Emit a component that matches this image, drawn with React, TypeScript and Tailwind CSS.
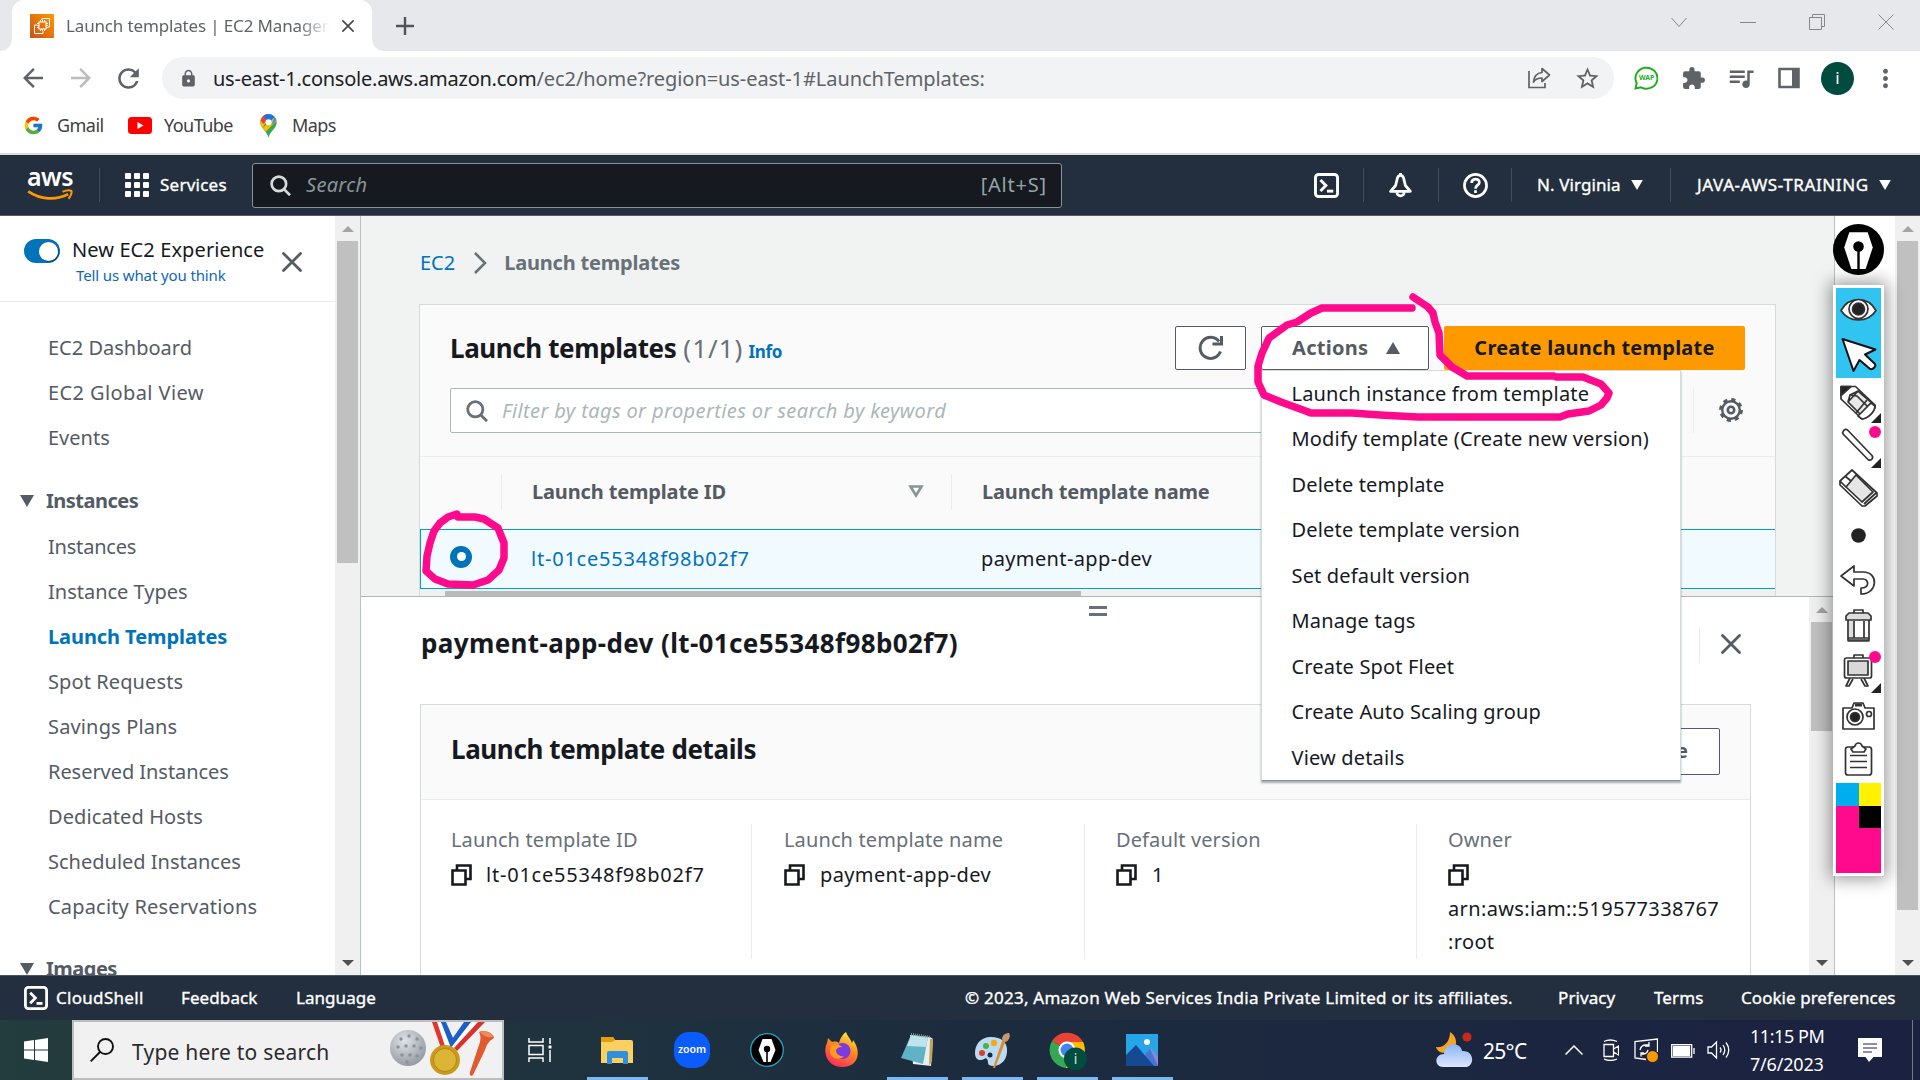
import React from "react";
import {
  MdArrowBack,
  MdArrowForward,
  MdExtension,
  MdLock,
  MdMoreVert,
  MdQueueMusic,
  MdRefresh,
  MdStarBorder,
} from "react-icons/md";
import { FcGoogle } from "react-icons/fc";

const medium = "[-webkit-text-stroke:0.35px_currentColor]";

/* ---------- shared pieces ---------- */

function CloseIcon({ className }: { className: string }) {
  return (
    <svg viewBox="0 0 20 20" className={className} fill="none" stroke="currentColor">
      <path d="M1.5 1.5l17 17M18.5 1.5l-17 17" strokeWidth="2.8" strokeLinecap="round" />
    </svg>
  );
}

function SearchIcon({ className }: { className: string }) {
  return (
    <svg viewBox="0 0 22 22" className={className} fill="none" stroke="currentColor" strokeWidth="2.8">
      <circle cx="9.3" cy="9.3" r="7.6" />
      <path d="M14.6 14.8L21 21.2" />
    </svg>
  );
}

function TerminalIcon({ className }: { className: string }) {
  return (
    <svg viewBox="0 0 24 24" className={className} fill="none" stroke="currentColor" strokeWidth="2.8">
      <rect x="1.4" y="1.4" width="21.2" height="21.2" rx="3" />
      <path d="M6.2 6.8l5.2 5.2-5.2 5.2" />
      <path d="M12.5 17.4h6" />
    </svg>
  );
}

function Triangle({ up, className }: { up?: boolean; className: string }) {
  return (
    <svg viewBox="0 0 14 12" className={className} fill="currentColor">
      {up ? <path d="M7 0l7 12H0z" /> : <path d="M0 0h14L7 12z" />}
    </svg>
  );
}

function ScrollArrow({ up }: { up?: boolean }) {
  return (
    <div className="flex h-[25px] w-full items-center justify-center">
      <svg viewBox="0 0 12 6" className={up ? "h-[6px] w-[12px] text-[#a3a3a3]" : "h-[6px] w-[12px] text-[#505050]"} fill="currentColor">
        {up ? <path d="M6 0l6 6H0z" /> : <path d="M0 0h12L6 6z" />}
      </svg>
    </div>
  );
}

function Scrollbar({ thumb }: { thumb: string }) {
  return (
    <div className="flex h-full w-[25px] shrink-0 flex-col items-center bg-[#f0f0f0]">
      <ScrollArrow up />
      <div className={`w-[21px] bg-[#c0c0c0] ${thumb}`} />
      <div className="flex-1" />
      <ScrollArrow />
    </div>
  );
}

function PenNib({ className }: { className: string }) {
  return (
    <svg viewBox="0 0 50 50" className={className}>
      <circle cx="25" cy="25" r="25" fill="#000" />
      <path d="M16 8h18l5 15-7 21H18l-7-21z" fill="#fff" />
      <circle cx="25" cy="22" r="5.2" fill="#000" />
      <path d="M25 22v23" stroke="#000" strokeWidth="2.4" />
    </svg>
  );
}

/* ---------- browser chrome ---------- */

function Ec2Favicon() {
  return (
    <svg viewBox="0 0 24 24" className="size-6 shrink-0">
      <defs>
        <linearGradient id="ec2" x1="0" y1="1" x2="1" y2="0">
          <stop offset="0" stopColor="#c8511b" />
          <stop offset="1" stopColor="#f90" />
        </linearGradient>
      </defs>
      <rect width="24" height="24" fill="url(#ec2)" />
      <g fill="none" stroke="#fff" strokeWidth="1">
        <rect x="9" y="8" width="7" height="7" />
        <path d="M10.500 6v2M12.500 6v2M14.500 6v2M10.500 15v2M12.500 15v2M14.500 15v2M7 9.500h2M7 11.500h2M7 13.500h2M16 9.500h2M16 11.500h2M16 13.500h2" />
        <path d="M12 6V4.500h7.500V13H18M7 11H4.500v8.500h8.500V17" />
      </g>
    </svg>
  );
}

function TabStrip() {
  return (
    <div className="flex h-[51px] bg-[#e7e8ec]">
      <div className="flex w-3 items-end bg-white">
        <div className="h-full w-full rounded-br-[12px] bg-[#e7e8ec]" />
      </div>
      <div className="flex h-full w-[360px] items-center rounded-t-[12px] bg-white pl-[18px]">
        <Ec2Favicon />
        <span className="ml-[12px] w-[264px] overflow-hidden whitespace-nowrap text-[17px] tracking-[-0.15px] text-[#5f6368] [mask-image:linear-gradient(90deg,#000_88%,transparent)]">
          Launch templates | EC2 Managem
        </span>
        <CloseIcon className="ml-[12px] size-[12px] text-[#45484c]" />
      </div>
      <div className="flex w-3 items-end bg-white">
        <div className="h-full w-full rounded-bl-[12px] bg-[#e7e8ec]" />
      </div>
      <svg viewBox="0 0 18 18" className="mt-[17px] ml-[12px] size-[18px]" stroke="#505357" strokeWidth="2.4">
        <path d="M9 0v18M0 9h18" />
      </svg>
      <div className="flex-1" />
      <div className="flex h-[43px] items-center gap-[53px] pr-[26px]">
        <svg viewBox="0 0 16 16" className="size-4" fill="none" stroke="#85878b"><path d="M.5 4L8 12.500 15.500 4" /></svg>
        <svg viewBox="0 0 16 16" className="size-4" fill="none" stroke="#85878b"><path d="M0 8.500h16" /></svg>
        <svg viewBox="0 0 16 16" className="size-4" fill="none" stroke="#85878b"><path d="M.5 3.500h12v12H.5zM3.500 3.500v-3h12v12h-3" /></svg>
        <svg viewBox="0 0 16 16" className="size-4" fill="none" stroke="#85878b"><path d="M.5.5l15 15M15.500.5l-15 15" /></svg>
      </div>
    </div>
  );
}

function AddressBar() {
  return (
    <div className="flex h-[54px] items-center bg-white pl-[18px] text-[#5f6368]">
      <MdArrowBack className="size-[30px]" />
      <MdArrowForward className="ml-[18px] size-[30px] text-[#babcbe]" />
      <MdRefresh className="ml-[17px] size-[31px]" />
      <div className="ml-[18px] flex h-[42px] w-[1452px] items-center rounded-full bg-[#f1f3f4] pl-[17px]">
        <MdLock className="size-[19px]" />
        <span className="mt-[2px] ml-[15px] text-[20px] tracking-[-0.24px] whitespace-nowrap text-[#202124]">
          us-east-1.console.aws.amazon.com
          <span className="tracking-[-0.07px] text-[#5f6368]">/ec2/home?region=us-east-1#LaunchTemplates:</span>
        </span>
        <div className="flex-1" />
        <svg viewBox="0 0 23 22" className="h-[22px] w-[23px]" fill="none" stroke="currentColor" strokeWidth="1.700">
          <path d="M1 4v16.500h16V16" />
          <path d="M14 1.500l7.500 6.500-7.500 6.500V11c-4 0-6.500 1-8.500 4 .5-5 3.500-9 8.500-9.500z" strokeLinejoin="round" />
        </svg>
        <MdStarBorder className="mr-[13px] ml-[23px] size-[27px]" />
      </div>
      <svg viewBox="0 0 24 24" className="ml-[20px] size-6">
        <path d="M1.500 22.500l1.200-5.500A11 10.500 0 1 1 7 21.300z" fill="#fff" stroke="#1faa1f" strokeWidth="1.900" />
        <text x="12.500" y="14.200" textAnchor="middle" fontSize="6.800" fontWeight="700" fill="#1faa1f" fontFamily="Noto Sans">WAP</text>
      </svg>
      <MdExtension className="ml-[23px] size-[25px]" />
      <MdQueueMusic className="ml-[20px] size-[30px]" />
      <svg viewBox="0 0 22 22" className="ml-[22px] size-[22px]"><path d="M1.500 2h19v18h-19z" fill="#fff" stroke="#5f6368" strokeWidth="2.600" /><path d="M14 1h7v20h-7z" fill="#5f6368" /></svg>
      <div className="ml-[21px] flex size-[33px] items-center justify-center rounded-full bg-[#004d40] text-[17px] text-white">i</div>
      <MdMoreVert className="ml-[17px] size-[29px]" />
    </div>
  );
}

function BookmarkBar() {
  return (
    <div className="flex h-[48px] items-center bg-white pl-[23px] pb-[7px] text-[18px] tracking-[-0.55px] text-[#3c4043]">
      <FcGoogle className="size-[21px]" />
      <span className="ml-[13px] w-[71px]">Gmail</span>
      <svg viewBox="0 0 24 17" className="h-[17px] w-6"><rect width="24" height="17" rx="3.500" fill="#f00" /><path d="M9.500 5l6 3.500-6 3.500z" fill="#fff" /></svg>
      <span className="ml-[12px] w-[96px]">YouTube</span>
      <svg viewBox="0 0 17 24" className="h-6 w-[17px]">
        <path d="M8.500 24C7.500 17.500.3 14.500.3 8.300a8.200 8.200 0 0 1 16.400 0c0 6.200-7.200 9.200-8.200 15.700z" fill="#34a853" />
        <path d="M2.700 14.200C1.300 12.500.3 10.600.3 8.300c0-1.900.7-3.700 1.800-5.100l4.200 3.900z" fill="#fbbc04" />
        <path d="M2.700 14.200L14 2.200a8.200 8.200 0 0 1 2.500 4.300L5.800 17.800z" fill="#fbbc04" />
        <path d="M2.100 3.200C3.600 1.300 5.900.1 8.500.1l-2.300 7z" fill="#ea4335" />
        <path d="M2.100 3.200l4.100 3.600L3.700 10 .5 6.800c.2-1.300.8-2.600 1.600-3.600z" fill="#ea4335" />
        <path d="M3.200 2.200A8.200 8.200 0 0 1 14.600 2.800l-4.800 5.500z" fill="#1a73e8" />
        <path d="M14.600 2.800a8.200 8.200 0 0 1 1.700 3.200l-5 5z" fill="#4285f4" />
        <circle cx="8.500" cy="8.300" r="3" fill="#fff" />
      </svg>
      <span className="ml-[15px]">Maps</span>
    </div>
  );
}

/* ---------- AWS header ---------- */

function Divider() {
  return <div className="h-[34px] w-px shrink-0 bg-[#414d5c]" />;
}

function AwsHeader() {
  return (
    <header className="flex h-[63px] items-center border-t-2 border-b border-t-[#d9dcdb] border-b-[#5a5a68] bg-[#232f3e] text-[17px] text-white">
      <div className="ml-[25px] flex w-[50px] flex-col items-center">
        <span className="h-[21px] text-[25px] leading-[17px] font-semibold tracking-[-0.6px]">aws</span>
        <svg viewBox="0 0 50 14" className="h-[13px] w-[49px]" fill="none" stroke="#f90">
          <path d="M1 2.500c13 9 30 10 43 3" strokeWidth="3" />
          <path d="M38 3c4-1.600 8-1.800 9.500-1 .8 1.600-.8 6-3 8.500" strokeWidth="2.200" />
        </svg>
      </div>
      <div className="ml-[24px]"><Divider /></div>
      <svg viewBox="0 0 24 24" className="ml-[25px] size-6" fill="#fff">
        {[0, 9, 18].map((y) => [0, 9, 18].map((x) => <rect key={`${x}-${y}`} x={x} y={y} width="6" height="6" rx="1" />))}
      </svg>
      <span className={`ml-[11px] w-[92px] tracking-[0.25px] ${medium}`}>Services</span>
      <div className="flex h-[45px] w-[810px] items-center rounded-[3px] border border-[#879596] bg-[#16191f] px-[17px]">
        <SearchIcon className="size-[21px] text-[#d5dbdb]" />
        <span className="ml-[15px] flex-1 text-[20px] tracking-[0.3px] text-[#879596] italic">Search</span>
        <span className="-mr-[3px] text-[20px] tracking-[0.8px] text-[#95a5a6]">[Alt+S]</span>
      </div>
      <TerminalIcon className="ml-[252px] size-[25px]" />
      <div className="mx-[24px]"><Divider /></div>
      <svg viewBox="0 0 24 24" className="size-[25px]" fill="none" stroke="#fff" strokeWidth="2.700">
        <path d="M12 2.300c-1.700 0-2.600 1.200-3 2.700L7.300 12 2.500 17.600h19L16.700 12 15 5c-.4-1.500-1.300-2.700-3-2.700z" strokeLinejoin="round" />
        <path d="M8.500 18.500a3.500 3.500 0 0 0 7 0" />
        <path d="M12 0v3" />
      </svg>
      <div className="mr-[24px] ml-[25px]"><Divider /></div>
      <svg viewBox="0 0 24 24" className="size-[25px]" fill="none" stroke="#fff" strokeWidth="2.600">
        <circle cx="12" cy="12" r="10.600" />
        <path d="M8.300 9.600c0-4.800 7.400-4.800 7.400-.6 0 2.800-3.700 2.600-3.700 6" />
        <path d="M12 16.500v2.700" />
      </svg>
      <div className="ml-[23px]"><Divider /></div>
      <span className={`ml-[25px] w-[94px] tracking-[0.1px] ${medium}`}>N. Virginia</span>
      <Triangle className="h-[10px] w-[12px]" />
      <div className="ml-[27px]"><Divider /></div>
      <span className={`ml-[26px] w-[182px] tracking-[0.6px] whitespace-nowrap ${medium}`}>JAVA-AWS-TRAINING</span>
      <Triangle className="h-[10px] w-[12px]" />
    </header>
  );
}

/* ---------- side navigation ---------- */

const topLinks = ["EC2 Dashboard", "EC2 Global View", "Events"];
const instanceLinks = [
  "Instances",
  "Instance Types",
  "Launch Templates",
  "Spot Requests",
  "Savings Plans",
  "Reserved Instances",
  "Dedicated Hosts",
  "Scheduled Instances",
  "Capacity Reservations",
];

const linkTracking: Record<string, string> = {
  "EC2 Global View": "tracking-[0.4px]",
  Instances: "tracking-[-0.2px]",
  "Spot Requests": "tracking-[0.1px]",
  "Savings Plans": "tracking-[0.15px]",
  "Reserved Instances": "tracking-[-0.05px]",
  "Dedicated Hosts": "tracking-[0.1px]",
  "Capacity Reservations": "tracking-[0.18px]",
};

function NavLink({ label }: { label: string }) {
  return (
    <div className={`flex h-[45px] items-center pl-[48px] ${linkTracking[label] ?? ""}`}>{label}</div>
  );
}

function NavGroup({ label }: { label: string }) {
  return (
    <div className="flex h-[45px] items-center pl-[20px] font-bold tracking-[-0.5px]">
      <Triangle className="mr-[12px] h-[12px] w-[14px]" />
      {label}
    </div>
  );
}

function Sidebar() {
  return (
    <aside className="h-full w-[335px] shrink-0 overflow-hidden bg-white text-[20px] text-[#545b64]">
      <div className="flex h-[86px] border-b border-[#eaeded]">
        <div className="mt-[23px] ml-[24px] flex h-6 w-9 items-center justify-end rounded-full bg-[#0073bb] pr-[2px]">
          <div className="size-[19px] rounded-full bg-white shadow-[1px_1px_1px_rgba(0,0,0,.4)]" />
        </div>
        <div className="ml-[12px] w-[210px] whitespace-nowrap">
          <div className="mt-[20px] h-[27px] leading-[27px] tracking-[0.1px] text-[#16191f]">New EC2 Experience</div>
          <div className="ml-[4px] h-[24px] text-[15px] leading-[24px] tracking-[-0.12px] text-[#1166bb]">Tell us what you think</div>
        </div>
        <CloseIcon className="mt-[36px] size-[20px] text-[#545b64]" />
      </div>
      <nav className="pt-[23px]">
        {topLinks.map((l) => (
          <NavLink key={l} label={l} />
        ))}
        <div className="h-[18px]" />
        <NavGroup label="Instances" />
        <div className="h-px" />
        {instanceLinks.map((l) =>
          l === "Launch Templates" ? (
            <div key={l} className="flex h-[45px] items-center pl-[48px] font-bold tracking-[-0.08px] text-[#0073bb]">{l}</div>
          ) : (
            <NavLink key={l} label={l} />
          ),
        )}
        <div className="h-[17px]" />
        <NavGroup label="Images" />
      </nav>
    </aside>
  );
}

/* ---------- launch templates table ---------- */

const menuItems = [
  "Launch instance from template",
  "Modify template (Create new version)",
  "Delete template",
  "Delete template version",
  "Set default version",
  "Manage tags",
  "Create Spot Fleet",
  "Create Auto Scaling group",
  "View details",
];

function ActionsMenu() {
  return (
    <div className="absolute top-[44px] left-0 z-20 h-[411px] w-[420px] border border-[#d5dbdb] border-b-[#879596] bg-white shadow-[0_2px_2px_rgba(0,28,36,.35)]">
      {menuItems.map((m) => (
        <div key={m} className="flex h-[45.500px] items-center pl-[29.500px] text-[20px] tracking-[0.17px] whitespace-nowrap text-[#16191f]">
          {m}
        </div>
      ))}
    </div>
  );
}

function TablePanel() {
  return (
    <section className="mt-[38px] ml-[58px] h-[292px] w-[1357px] border border-[#d5dbdb] border-b-0 bg-[#fafafa]">
      <div className="flex h-[83px] pt-[21px] pl-[30px]">
        <div className="flex w-[725px] items-baseline leading-[44px] whitespace-nowrap">
          <span className="text-[26px] font-bold tracking-[-0.4px] text-[#16191f]">Launch templates</span>
          <span className="ml-[7px] text-[26px] tracking-[1px] text-[#687078]">(1/1)</span>
          <span className="ml-[5px] text-[17px] font-bold tracking-[-0.3px] text-[#0073bb]">Info</span>
        </div>
        <button className="flex h-[44px] w-[71px] items-center justify-center rounded-[2px] border border-[#545b64] bg-white">
          <svg viewBox="0 0 26 26" className="size-[26px]" fill="none" stroke="#545b64" strokeWidth="3">
            <path d="M22.500 16.500A10.500 10.500 0 1 1 21 6.500" />
            <path d="M23.500 1v8h-9" />
          </svg>
        </button>
        <div className="relative ml-[15px]">
          <button className="flex h-[44px] w-[168px] items-center rounded-[2px] border border-[#545b64] bg-white pl-[30px] text-[20px] font-bold tracking-[0.3px] text-[#545b64]">
            Actions
            <Triangle up className="ml-[17px] h-[12.500px] w-[16px]" />
          </button>
          <ActionsMenu />
        </div>
        <button className="ml-[15px] h-[44px] w-[301px] rounded-[2px] bg-[#f90] text-[20px] font-bold tracking-[0.25px] text-[#16191f]">
          Create launch template
        </button>
      </div>
      <div className="flex h-[68px]">
        <div className="ml-[30px] flex h-[45px] w-[900px] items-center rounded-[2px] border border-[#aab7b8] bg-white pl-[15px]">
          <SearchIcon className="size-[22px] text-[#687078]" />
          <span className="ml-[14px] text-[20px] tracking-[0.38px] text-[#aab7b8] italic">
            Filter by tags or properties or search by keyword
          </span>
        </div>
        <div className="ml-[343px] h-[45px] w-px bg-[#eaeded]" />
        <svg viewBox="0 0 24 24" className="mt-[10px] ml-[25px] size-6" fill="none" stroke="#545b64">
          <circle cx="12" cy="12" r="8.800" strokeWidth="2.400" />
          <circle cx="12" cy="12" r="10.600" strokeWidth="2.600" strokeDasharray="4.200 4.125" />
          <circle cx="12" cy="12" r="3.200" strokeWidth="2.600" />
        </svg>
      </div>
      <div className="flex h-[73px] items-center border-t border-[#eaeded] pb-[3px] text-[20px] font-bold text-[#545b64]">
        <div className="h-[36px] w-[82px] border-r border-[#eaeded]" />
        <div className="flex h-[36px] w-[450px] items-center border-r border-[#eaeded] pl-[30px]">
          <span className="w-[376px] tracking-[-0.15px]">Launch template ID</span>
          <svg viewBox="0 0 16 13" className="h-[13px] w-[16px]" fill="none" stroke="#879596" strokeWidth="2.600"><path d="M2.500 1.500h11L8 10.500z" /></svg>
        </div>
        <span className="pl-[30px] tracking-[-0.15px]">Launch template name</span>
      </div>
      <div className="flex h-[60px] items-center border-y border-l border-[#00a1c9] bg-[#f1faff] text-[20px]">
        <div className="mb-[5px] ml-[29px] flex size-[22px] items-center justify-center rounded-full bg-[#0073bb]">
          <div className="size-[9px] rounded-full bg-white" />
        </div>
        <span className="ml-[59px] w-[450px] tracking-[0.78px] text-[#0073bb]">lt-01ce55348f98b02f7</span>
        <span className="tracking-[0.38px] text-[#16191f]">payment-app-dev</span>
      </div>
      <div className="h-[7px] bg-[#f0f0f0] pt-[2px] pl-[25px]">
        <div className="h-[5px] w-[636px] bg-[#b9bbbb]" />
      </div>
    </section>
  );
}

/* ---------- split panel ---------- */

function CopyIcon() {
  return (
    <svg viewBox="0 0 21 22" className="h-[22px] w-[21px] shrink-0" fill="none" stroke="#16191f" strokeWidth="2.600">
      <path d="M1.500 6.500h13v14h-13z" />
      <path d="M6 6V1.500h13.500V15H15" />
    </svg>
  );
}

function DetailField({ label, value, wide, last }: { label: string; value?: string; wide?: boolean; last?: boolean }) {
  return (
    <div className={last ? "h-[135px] w-[332px] pl-[31px]" : "h-[135px] w-[332px] border-r border-[#eaeded] pl-[31px]"}>
      <div className="h-[33px] leading-[31px] tracking-[0.12px] text-[#687078]">{label}</div>
      <div className="flex h-[35px] items-center pt-[1px]">
        <CopyIcon />
        {value && <span className={wide ? "ml-[14px] tracking-[0.78px]" : "ml-[15px] tracking-[0.38px]"}>{value}</span>}
      </div>
      {last && (
        <div className="w-[290px] leading-[33px] tracking-[0.36px]">
          arn:aws:iam::519577338767
          <br />
          :root
        </div>
      )}
    </div>
  );
}

function SplitPanel() {
  return (
    <section className="flex min-h-0 flex-1 overflow-hidden border-t border-[#aab7b8] bg-white">
      <div className="flex-1 overflow-hidden">
        <div className="ml-[728px] flex h-[19px] w-[18px] flex-col gap-[4px] pt-[9px]">
          <div className="h-[3px] bg-[#687078]" />
          <div className="h-[3px] bg-[#687078]" />
        </div>
        <div className="flex h-[88px] pl-[60px]">
          <h2 className="w-[1278px] text-[26px] leading-[54px] font-bold tracking-[0.37px] text-[#16191f]">
            payment-app-dev (lt-01ce55348f98b02f7)
          </h2>
          <div className="mt-[11px] h-[36px] w-px bg-[#eaeded]" />
          <CloseIcon className="mt-[18px] ml-[21px] size-[20px] text-[#545b64]" />
        </div>
        <div className="ml-[59px] h-[300px] w-[1331px] border border-[#d5dbdb] bg-white text-[20px] text-[#16191f]">
          <div className="flex h-[95px] items-center justify-between border-b border-[#eaeded] bg-[#fafafa] pr-[30px] pl-[30px]">
            <span className="mt-[-6px] text-[26px] font-bold tracking-[-0.38px]">Launch template details</span>
            <button className="mb-[2px] h-[47px] rounded-[2px] border border-[#545b64] bg-white px-[31px] font-bold text-[#545b64]">
              Delete template
            </button>
          </div>
          <div className="-ml-px flex pt-[24px]">
            <div className="w-[333px]"><DetailField label="Launch template ID" value="lt-01ce55348f98b02f7" wide /></div>
            <DetailField label="Launch template name" value="payment-app-dev" />
            <DetailField label="Default version" value="1" />
            <DetailField label="Owner" last />
          </div>
        </div>
      </div>
      <Scrollbar thumb="h-[109px]" />
    </section>
  );
}

/* ---------- on-screen drawing tool ---------- */

function Cell({ active, dot, more, children }: { active?: boolean; dot?: boolean; more?: boolean; children: React.ReactNode }) {
  return (
    <div className={active ? "relative flex size-[45px] items-center justify-center bg-[#32c4f0]" : "relative flex size-[45px] items-center justify-center"}>
      <svg viewBox="0 0 45 45" className="size-[45px]" fill="#fff" stroke="#333" strokeWidth="1.700" strokeLinejoin="round">
        {children}
      </svg>
      {dot && <div className="absolute top-[3px] right-0 size-3 rounded-full bg-[#ff0a8c]" />}
      {more && <div className="absolute right-0 bottom-0 size-[10px] bg-[#222] [clip-path:polygon(100%_0,100%_100%,0_100%)]" />}
    </div>
  );
}

function DrawingToolbar() {
  return (
    <div className="absolute top-[224px] left-[1833px] z-30 w-[51px]">
      <PenNib className="size-[51px]" />
      <div className="mt-[10px] bg-white p-[3px] shadow-[0_0_16px_3px_rgba(0,0,0,.4)]">
        <Cell active>
          <path d="M5 22.500C13 8 32 8 40 22.500 32 35 13 35 5 22.500z" />
          <circle cx="22.500" cy="21" r="9.500" />
          <circle cx="22.500" cy="21" r="6" fill="#222" />
        </Cell>
        <Cell active>
          <path d="M6.500 6l33 10.500-10.500 5 10 9.500c1.500 3-3 6.500-5.500 4.500L23.500 27l-6 11z" stroke="#111" strokeWidth="2" />
        </Cell>
        <Cell more>
          <path d="M5 8.500h14.500L39 27c1 5-6 13-13 14L5 21z" />
          <path d="M12 24l11-12M14 17l-2 7 13 13 11-12-14-12z" fill="#e8e8e8" />
          <path d="M14 17l7 1 11 11" fill="none" />
          <path d="M5 8.500h10L5 17.500z" fill="#222" />
          <path d="M31 22L20 35M35 25L23 38" fill="none" />
          <path d="M35 25l4 3c0 5-6 12-13 13l-4-3z" />
        </Cell>
        <Cell dot more>
          <path d="M7.500 8c1-2 3-2 4.500-.5l24 25c2 3-1.500 6-4 4L7.500 11.500C6.500 10.500 6.500 9 7.500 8z" />
        </Cell>
        <Cell>
          <path d="M4 13L16 2l25 23v3L29 38h-3L4 17z" />
          <path d="M10 19l10-12 17 17-11 10z" fill="#e6e6e6" />
          <path d="M4 13l6 6M9 8l6 5M28 36l12-11" fill="none" />
        </Cell>
        <Cell><circle cx="22.500" cy="22.500" r="7.300" fill="#222" stroke="none" /></Cell>
        <Cell>
          <path d="M5 18L18 8v6h9c16 0 15 22-2 22v-6c9 0 8-9 2-9h-9v7z" />
        </Cell>
        <Cell>
          <path d="M18 10V7h9v3M12 15v22h21V15" />
          <path d="M10 17v-4l3-3h19l3 3v4z" fill="#ddd" />
          <path d="M13 18h5v17h-5z" fill="#ddd" stroke="none" />
          <path d="M18 18v17M28 18v17M12 35h21M11.500 38h22" fill="none" />
        </Cell>
        <Cell dot more>
          <path d="M18 10V7h9v3M14 30l-4 8h3l4-7M28 30l4 8h-3l-4-7" />
          <rect x="8.500" y="10" width="27" height="20" rx="2" />
          <rect x="12" y="13" width="20" height="14" fill="#d8d8d8" />
        </Cell>
        <Cell>
          <path d="M7 15h9l2-5h9l2 5h9v21H7z" />
          <circle cx="19" cy="24" r="8" />
          <circle cx="19" cy="24" r="4.500" fill="#222" />
          <circle cx="33" cy="21" r="2.500" />
          <path d="M19 12h7" strokeWidth="3" />
        </Cell>
        <Cell>
          <rect x="9.500" y="9" width="26" height="28" rx="2.500" />
          <path d="M15 11l4-3c1-4 6-4 7 0l4 3-2 3H17z" />
          <path d="M14 17.500h17M14 23.500h17M14 29.500h17" fill="none" />
        </Cell>
        <div className="grid size-[45px] grid-cols-2 grid-rows-2 bg-[#ff0a8c]">
          <div className="bg-[#00aeef]" />
          <div className="bg-[#fff200]" />
          <div />
          <div className="bg-black" />
        </div>
        <div className="h-[45px] bg-[#ff0a8c]" />
      </div>
    </div>
  );
}

function InkStrokes() {
  return (
    <svg viewBox="0 0 1920 1080" className="pointer-events-none absolute inset-0 z-30 h-[1080px] w-[1920px]" fill="none" stroke="#ff0a8c" strokeWidth="7.500" strokeLinecap="round" strokeLinejoin="round">
      <path d="M457 514L448 517 440 523 434 531 430 543 427 556 426 571 435 579 448 584 473 585 488 580 499 570 504 558 504 543 498 528 484 519 475 517H458" />
      <path d="M1412 308H1322L1311 313 1297 322 1287 325 1269 338 1262 353 1258 366V382L1264 395 1281 402 1303 410 1311 413H1352L1380 415 1418 417H1560L1568 414 1589 411 1601 405 1607 398 1609 393 1601 384 1583 377H1556L1554 376H1467L1452 367 1440 355 1439 333 1435 322 1433 313 1428 307 1413 297" />
    </svg>
  );
}

/* ---------- footer and taskbar ---------- */

function Footer() {
  return (
    <footer className={`flex h-[45px] items-center border-t border-[#4a5361] bg-[#232f3e] pl-[24px] text-[17px] whitespace-nowrap text-white ${medium}`}>
      <TerminalIcon className="size-6" />
      <span className="ml-[8px] w-[125px] tracking-[0.3px]">CloudShell</span>
      <span className="w-[115px] tracking-[0.1px]">Feedback</span>
      <span className="tracking-[0.05px]">Language</span>
      <div className="flex-1" />
      <span className="w-[593px] tracking-[0.24px]">© 2023, Amazon Web Services India Private Limited or its affiliates.</span>
      <span className="w-[96px] tracking-[0.1px]">Privacy</span>
      <span className="w-[87px] tracking-[0.1px]">Terms</span>
      <span className="w-[179px] tracking-[0.05px]">Cookie preferences</span>
    </footer>
  );
}

function TaskIcon({ running, children }: { running?: boolean; children: React.ReactNode }) {
  return (
    <div className="flex h-full w-[75px] flex-col items-center">
      <svg viewBox="0 0 40 40" className="mt-[10px] mr-[2px] size-10">{children}</svg>
      <div className="flex-1" />
      {running && <div className="h-[3px] w-[61px] bg-[#76b9f5]" />}
    </div>
  );
}

function SearchHighlights() {
  return (
    <svg viewBox="0 0 112 56" className="h-[56px] w-[112px]">
      <defs>
        <radialGradient id="ball" cx=".4" cy=".3" r=".8"><stop offset="0" stopColor="#dfe3e8" /><stop offset="1" stopColor="#8b919b" /></radialGradient>
      </defs>
      <circle cx="19" cy="26" r="18" fill="url(#ball)" />
      <g fill="#8a919c">
        {[[12, 17], [20, 14], [28, 17], [9, 25], [17, 24], [25, 24], [32, 26], [13, 33], [21, 33], [28, 34], [18, 40]].map(([x, y]) => (
          <circle key={`${x}-${y}`} cx={x} cy={y} r="1.700" />
        ))}
      </g>
      <path d="M43 0h14l10 18-6 10h-8z" fill="#fff" />
      <path d="M43 0h5l8 24-4 2z" fill="#e2352f" />
      <path d="M52 0h5l8 18-3 8z" fill="#1c5fc8" />
      <path d="M93 0H76L61 22l5 6z" fill="#fff" />
      <path d="M82 0h-7L61 20v7z" fill="#1c5fc8" />
      <path d="M96 0h-7L65 26l3 3z" fill="#d8322c" />
      <circle cx="56" cy="38" r="15" fill="#c99a1c" />
      <circle cx="56" cy="38" r="11.500" fill="#dcb436" stroke="#b1860f" />
      <path d="M90 10c5-3 15 1 15 6-5 3-7 6-9 12L84 53c-2 2-4 0-3-3l9-27c2-6 2-9 0-13z" fill="#e0592f" />
      <path d="M91 10c4-2 13 1 13 5-4 1-11-1-13-5z" fill="#f08a5c" />
    </svg>
  );
}

function Taskbar() {
  return (
    <div className="flex h-[60px] bg-linear-to-r from-[#233c3d] via-[#1c2c3e] via-50% to-[#1b2141] text-white">
      <div className="flex w-[72px] items-center justify-center">
        <svg viewBox="0 0 24 24" className="size-6" fill="#fff"><path d="M0 3.500l10-1.400v9.400H0zM11 2l13-2v11.500H11zM0 12.500h10v9.400L0 20.500zM11 12.500h13V24l-13-2z" /></svg>
      </div>
      <div className="flex h-[60px] w-[432px] items-center border-2 border-[#bdbdbd] bg-[#f1f1f1] pl-[16px]">
        <svg viewBox="0 0 24 24" className="size-6" fill="none" stroke="#111" strokeWidth="1.900"><circle cx="15.500" cy="8.500" r="7.500" /><path d="M10 14L.7 23.300" /></svg>
        <span className="mt-[5px] ml-[18px] w-[257px] text-[21px] tracking-[0.22px] text-[#2b2b2b]">Type here to search</span>
        <SearchHighlights />
      </div>
      <div className="flex w-[76px] items-center pl-[24px]">
        <svg viewBox="0 0 24 24" className="size-6" fill="none" stroke="#fff" strokeWidth="1.500"><path d="M1 0v4h14V0M1 24v-4h14v4M1 7.500h14v9H1zM22 0v6M22 12v12" /><path d="M20.500 7.500h3v3h-3z" fill="#fff" stroke="none" /></svg>
      </div>
      <TaskIcon running>
        <path d="M4 7h12l2 3h16a2 2 0 0 1 2 2v21H4z" fill="#fcd05e" />
        <path d="M4 7h12l2 3-3 2H4z" fill="#e49d0c" />
        <path d="M10 34V23q0-2 2-2h17q2 0 2 2v11h-5v-6H15v6z" fill="#2f8fdf" />
      </TaskIcon>
      <TaskIcon>
        <rect x="2" y="2" width="36" height="36" rx="15" fill="#0b5cff" />
        <text x="20" y="23" textAnchor="middle" fontSize="10.500" fontWeight="600" fill="#fff" fontFamily="Noto Sans">zoom</text>
      </TaskIcon>
      <TaskIcon>
        <circle cx="20" cy="20" r="16.300" fill="#000" stroke="#2c9fc4" strokeWidth="1.300" />
        <path d="M15.500 9h9l4 11-5 12h-7l-5-12z" fill="#fff" />
        <circle cx="20" cy="19" r="3.200" fill="#000" /><path d="M20 19v14" stroke="#000" strokeWidth="1.600" />
      </TaskIcon>
      <TaskIcon>
        <defs><linearGradient id="fx" x1=".8" y1="0" x2=".3" y2="1"><stop offset="0" stopColor="#fff04a" /><stop offset=".45" stopColor="#ff8a1c" /><stop offset="1" stopColor="#ff2a5f" /></linearGradient></defs>
        <path d="M24 2c1 4 5 7 6 11 1-2 1-3 1-3 8 10 7 27-11 27C5 37 .500 22 5 13l1-5 4 4c4-1 6 0 7 1 1-5 4-9 7-11z" fill="url(#fx)" />
        <circle cx="20.500" cy="21" r="8" fill="#7a3be0" />
        <path d="M9 14c4-1 9 0 11 3-3 0-5 1-6 3 0 5 5 7 8 6-4 5-14 3-14-5z" fill="#ff9a1f" />
      </TaskIcon>
      <TaskIcon running>
        <path d="M13 5l20 2 3 2-2 27-18-2z" fill="#e9eef0" />
        <path d="M36 9l-1 22-3 5 1-27z" fill="#c7a25a" />
        <path d="M14 5l17 2-5 27-22-6z" fill="#5fb3c4" />
        <path d="M14 5l17 2-2 10-19-1z" fill="#bfe3ea" />
        <path d="M14 4l19 3" stroke="#888" strokeWidth="2.500" strokeDasharray="1 1" />
      </TaskIcon>
      <TaskIcon running>
        <path d="M19 7C8 7 3 15 3 23c0 8 6 8 9 6s4 1 4 4c0 5 18 5 19-11C36 12 29 7 19 7z" fill="#b9dcf2" />
        <circle cx="10" cy="23" r="3" fill="#e23b2e" /><circle cx="14" cy="16" r="3" fill="#4fb04a" /><circle cx="22" cy="13" r="3.200" fill="#f6a81c" /><circle cx="18" cy="25" r="2.500" fill="#1c2c3e" />
        <path d="M31 8l3 2-11 28h-2z" fill="#e08a2e" />
        <path d="M30 9c0-4 4-6 7-6 2 3 0 7-3 9z" fill="#c19a6b" />
      </TaskIcon>
      <TaskIcon running>
        <path d="M20 20L5 11A18 18 0 0 1 36 12z" fill="#ea4335" />
        <path d="M20 20h17A18 18 0 0 0 36 12H20z" fill="#fbbc04" />
        <path d="M20 20l16-8a18 18 0 0 1-17 26z" fill="#fbbc04" />
        <path d="M20 20L5 11a18 18 0 0 0 14 27z" fill="#34a853" />
        <circle cx="20" cy="20" r="8.500" fill="#fff" /><circle cx="20" cy="20" r="6.500" fill="#4285f4" />
        <circle cx="28.500" cy="29" r="11.500" fill="#004d40" />
        <text x="28.500" y="34" textAnchor="middle" fontSize="14" fill="#cfe5e0" fontFamily="Noto Sans">i</text>
      </TaskIcon>
      <TaskIcon running>
        <path d="M4 4h32v32H4z" fill="#27a5e8" />
        <path d="M20 36l9-18 7 9v9z" fill="#8b87d8" />
        <path d="M36 36H20l4-13 4-4z" fill="#4576cf" />
        <path d="M4 25l10-10 18 21H4z" fill="#154a92" />
        <circle cx="25" cy="12" r="3" fill="#fff" />
      </TaskIcon>
      <div className="flex-1" />
      <svg viewBox="0 0 38 36" className="mt-[12px] h-[36px] w-[38px]">
        <defs><linearGradient id="cl" x1="0" y1="0" x2="0" y2="1"><stop offset="0" stopColor="#8cb4f4" /><stop offset="1" stopColor="#dbe8fc" /></linearGradient></defs>
        <path d="M15 0c8 5 8 15 1 19S2 20 1 15c7 1 14-4 14-15z" fill="#f5a623" />
        <path d="M8 35c-9 0-9-13 1-13 1-13 17-12 18-3 13-1 13 16 3 16z" fill="url(#cl)" />
        <circle cx="32" cy="5" r="4.600" fill="#c42b1c" />
      </svg>
      <span className="mt-[16px] ml-[10px] w-[82px] text-[21px] tracking-[-0.7px]">25°C</span>
      <svg viewBox="0 0 18 10" className="mt-[25px] h-[10px] w-[18px]" fill="none" stroke="#fff" strokeWidth="1.500"><path d="M.5 9.500L9 1l8.500 8.500" /></svg>
      <svg viewBox="0 0 16 22" className="mt-[19px] ml-[20px] h-[22px] w-[16px]" fill="none" stroke="#fff" strokeWidth="1.300"><path d="M1 5.500h9.500v12H1zM10.500 10l5-3v9l-5-3M1 2.500q6-3 13 0M1 20q6 3 13 0" /></svg>
      <svg viewBox="0 0 24 24" className="mt-[18px] ml-[15px] size-6" fill="none" stroke="#fff" strokeWidth="1.300"><path d="M12 21.500L1 20V3.500L23.500 1v13M6 12q1-5 6-5h3M15 4v4h-4M14 12q-1 4-5 4H7M7 18.500V15h3" /><circle cx="18.500" cy="18.500" r="5.500" fill="#f90" stroke="none" /></svg>
      <svg viewBox="0 0 24 14" className="mt-[24px] ml-[13px] h-[14px] w-6" fill="none" stroke="#fff" strokeWidth="1.300"><path d="M.7.700h20v12.500H.7zM23 4v6" /><path d="M2.500 2.500h16v9h-16z" fill="#fff" /></svg>
      <svg viewBox="0 0 24 20" className="mt-[20px] ml-[12px] h-[20px] w-6" fill="none" stroke="#fff" strokeWidth="1.300"><path d="M1 7h3.500L9.500 2v16l-5-5H1zM13 7.500q2 2.500 0 5M16 5q3.500 5 0 10M19 2.500q5.500 7.500 0 15" /></svg>
      <div className="mt-[2px] ml-[19px] w-[108px] text-[18px] leading-[28px]">
        <div className="tracking-[-0.45px]">11:15 PM</div>
        <div className="tracking-[-0.2px]">7/6/2023</div>
      </div>
      <svg viewBox="0 0 24 24" className="mt-[18px] size-6" fill="#fff"><path d="M0 0h24v19h-8.500L11 24l-3.500-5H0z" /><path d="M5 6h14M5 10h14M5 14h9" stroke="#1b2141" strokeWidth="1.200" /></svg>
      <div className="ml-[30px] h-full w-px bg-[#747689]" />
      <div className="w-[7px]" />
    </div>
  );
}

export default function App() {
  return (
    <div className="relative h-[1080px] w-[1920px] overflow-hidden bg-white font-['Noto_Sans','Open_Sans',sans-serif]">
      <TabStrip />
      <AddressBar />
      <BookmarkBar />
      <AwsHeader />
      <div className="flex h-[759px]">
        <Sidebar />
        <Scrollbar thumb="h-[322px]" />
        <main className="flex h-full w-[1475px] flex-col border-x border-[#b9c2c3] bg-[#f1f3f3]">
          <div className="flex h-[50px] items-end pl-[59px] text-[20px]">
            <div className="flex h-[7px] items-center">
              <span className="leading-none text-[#0073bb]">EC2</span>
              <svg viewBox="0 0 14 22" className="ml-[18px] h-[22px] w-[14px]" fill="none" stroke="#687078" strokeWidth="2.600"><path d="M2 1l10 10L2 21" /></svg>
              <span className="ml-[17px] leading-none font-bold tracking-[-0.2px] text-[#687078]">Launch templates</span>
            </div>
          </div>
          <TablePanel />
          <SplitPanel />
        </main>
        <div className="h-full w-[60px] bg-white" />
        <Scrollbar thumb="h-[669px]" />
      </div>
      <Footer />
      <Taskbar />
      <DrawingToolbar />
      <InkStrokes />
    </div>
  );
}
